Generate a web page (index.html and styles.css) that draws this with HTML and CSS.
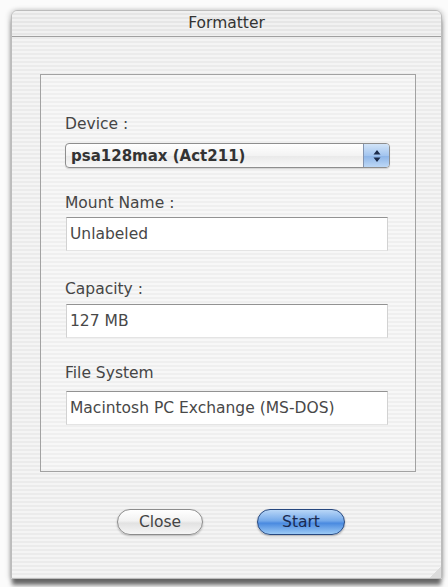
FILE: index.html
```html
<!DOCTYPE html>
<html>
<head>
<meta charset="utf-8">
<link rel="stylesheet" href="styles.css">
</head>
<body>
<div class="window">
  <div class="titlebar">Formatter</div>
  <div class="content">
    <div class="group">
      <div class="label">Device :</div>
      <div class="popup">
        <span class="popup-text">psa128max (Act211)</span>
        <span class="stepper">
          <svg width="8" height="14" viewBox="0 0 8 14"><path d="M4 1 L7.5 5.5 L0.5 5.5 Z M4 13 L7.5 8.5 L0.5 8.5 Z" fill="#1d2c4a"/></svg>
        </span>
      </div>
      <div class="label gap-mount">Mount Name :</div>
      <div class="field f-mount">Unlabeled</div>
      <div class="label gap-cap">Capacity :</div>
      <div class="field f-cap">127 MB</div>
      <div class="label gap-fs">File System</div>
      <div class="field f-fs">Macintosh PC Exchange (MS-DOS)</div>
    </div>
    <div class="buttons">
      <div class="btn btn-close">Close</div>
      <div class="btn btn-start">Start</div>
    </div>
  </div>
  <div class="grip"></div>
</div>
</body>
</html>
```

FILE: styles.css
```css
html, body {
  margin: 0;
  padding: 0;
}
body {
  width: 448px;
  height: 587px;
  overflow: hidden;
  background: #fbfbfb;
  font-family: "DejaVu Sans", "Liberation Sans", sans-serif;
}
.window {
  position: relative;
  box-sizing: border-box;
  margin: 10px 6px 0 11px;
  height: 569px;
  border: 1px solid #bcbcbc;
  border-radius: 6px 6px 0 0;
  background: repeating-linear-gradient(to bottom, #f4f4f4 0 2px, #ebebeb 2px 4px);
  box-shadow: 0 7px 4px -1px rgba(60,60,60,0.75), -2px 0 5px rgba(0,0,0,0.14), 2px 0 5px rgba(0,0,0,0.14);
  display: flex;
  flex-direction: column;
}
.titlebar {
  height: 25px;
  line-height: 25px;
  border-bottom: 1px solid #a0a0a0;
  border-radius: 6px 6px 0 0;
  text-align: center;
  font-size: 15.5px;
  color: #333333;
  background: repeating-linear-gradient(to bottom, #f1f1f1 0 2px, #e6e6e6 2px 4px);
}
.content {
  padding: 37px 25px 0 28px;
  display: flex;
  flex-direction: column;
}
.group {
  box-sizing: border-box;
  height: 398px;
  border: 1px solid #a2a2a2;
  padding: 39px 25px 0 24px;
  background: repeating-linear-gradient(to bottom, #f7f7f7 0 2px, #efefef 2px 4px);
}
.label {
  font-size: 15.5px;
  line-height: 20px;
  color: #454545;
}
.gap-mount { margin-top: 25px; }
.gap-cap { margin-top: 28px; }
.gap-fs { margin-top: 25px; }
.popup {
  margin-top: 9px;
  height: 25px;
  box-sizing: border-box;
  border: 1px solid #8e8e8e;
  border-radius: 4px;
  background: linear-gradient(to bottom, #ffffff, #f3f3f3 50%, #e9e9e9 51%, #f8f8f8);
  display: flex;
  align-items: center;
  overflow: hidden;
  box-shadow: 0 1px 1px rgba(0,0,0,0.15);
}
.popup-text {
  flex: 1;
  padding-left: 5px;
  font-size: 15px;
  font-weight: bold;
  color: #333333;
}
.stepper {
  width: 25px;
  align-self: stretch;
  border-left: 1px solid #8394b0;
  background: linear-gradient(to bottom, #d2e4f8, #a3c5ef 50%, #8cb4e7 51%, #bdd8f6);
  display: flex;
  align-items: center;
  justify-content: center;
}
.field {
  box-sizing: border-box;
  height: 34px;
  line-height: 33px;
  background: #ffffff;
  border-top: 1px solid #929292;
  border-left: 1px solid #d2d2d2;
  border-right: 1px solid #d2d2d2;
  border-bottom: 1px solid #e4e4e4;
  padding-left: 3px;
  font-size: 15.5px;
  color: #484848;
  margin-left: 1px;
  margin-right: 2px;
}
.f-mount { margin-top: 4px; }
.f-cap { margin-top: 5px; }
.f-fs { margin-top: 8px; }
.buttons {
  margin-top: 37px;
  margin-left: -28px;
  margin-right: -25px;
  padding-left: 9px;
  display: flex;
  justify-content: center;
  gap: 54px;
}
.btn {
  box-sizing: border-box;
  height: 26px;
  line-height: 24px;
  border-radius: 13px;
  text-align: center;
  font-size: 15.5px;
}
.btn-close {
  width: 86px;
  border: 1px solid #8c8c8c;
  color: #444444;
  background: linear-gradient(to bottom, #ffffff, #f2f2f2 45%, #e2e2e2 55%, #f6f6f6);
  box-shadow: 0 1px 2px rgba(0,0,0,0.25);
}
.btn-start {
  width: 88px;
  border: 1px solid #27487f;
  color: #1a2a50;
  background: linear-gradient(to bottom, #b8d6f7, #74a9ea 45%, #4a8ae0 55%, #9ccaf5);
  box-shadow: 0 1px 2px rgba(0,0,0,0.3);
}
.grip {
  position: absolute;
  right: 0;
  bottom: 0;
  width: 12px;
  height: 12px;
  background: linear-gradient(135deg, transparent 50%, #dcdcdc 50%);
}
```
